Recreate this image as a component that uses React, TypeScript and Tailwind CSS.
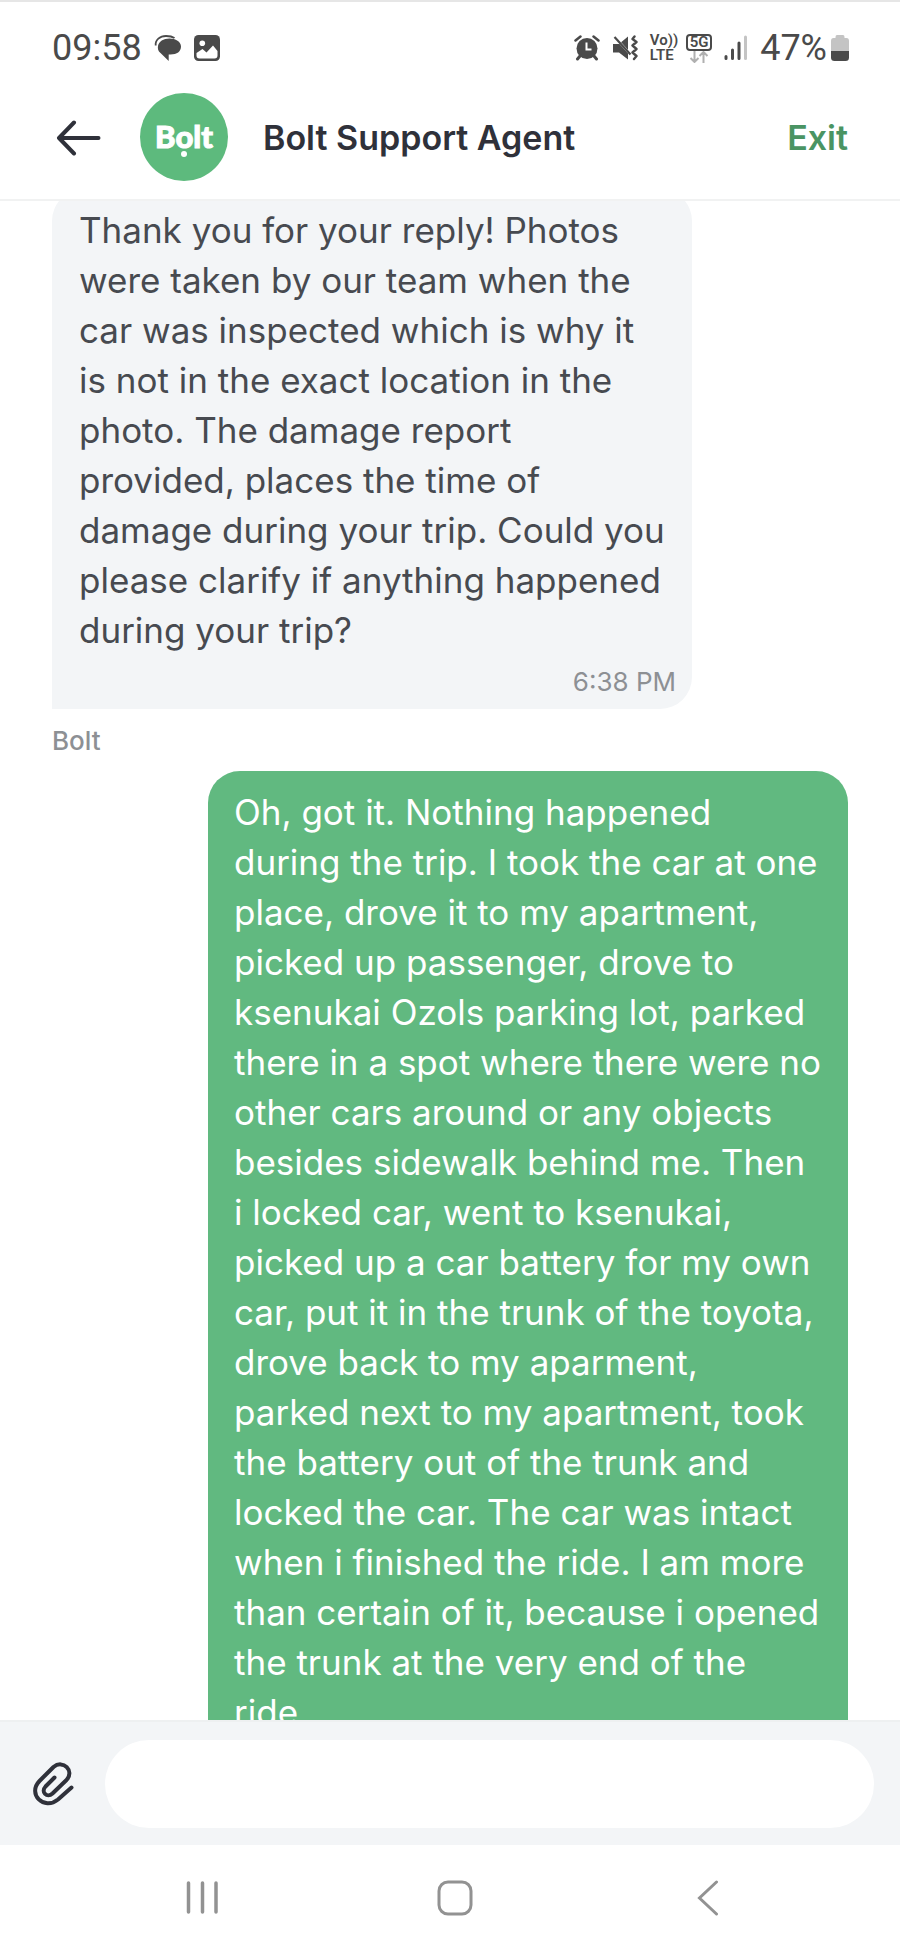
import type { ReactNode } from 'react';

type Message = { from: 'agent' | 'me'; text: string; time?: string; sender?: string };

const messages: Message[] = [
  {
    from: 'agent',
    text: 'Thank you for your reply! Photos were taken by our team when the car was inspected which is why it is not in the exact location in the photo. The damage report provided, places the time of damage during your trip. Could you please clarify if anything happened during your trip?',
    time: '6:38 PM',
    sender: 'Bolt',
  },
  {
    from: 'me',
    text: 'Oh, got it. Nothing happened during the trip. I took the car at one place, drove it to my apartment, picked up passenger, drove to ksenukai Ozols parking lot, parked there in a spot where there were no other cars around or any objects besides sidewalk behind me. Then i locked car, went to ksenukai, picked up a car battery for my own car, put it in the trunk of the toyota, drove back to my aparment, parked next to my apartment, took the battery out of the trunk and locked the car. The car was intact when i finished the ride. I am more than certain of it, because i opened the trunk at the very end of the ride.',
  },
];

const StatusBar = () => (
  <div className="flex h-24 items-center justify-between border-t-2 border-[#e6e6e6] pr-[51px] pb-0.5 pl-[52px] font-['Roboto',sans-serif] text-[#4a4a4a]">
    <div className="flex items-center gap-3">
      <span className="text-[36px] leading-10">09:58</span>
      <svg width="28" height="28" viewBox="0 0 28 28" fill="currentColor" aria-hidden="true">
        <path d="M15.500 4.500C21.500 4.500 27 7.500 27 12.500C27 17.500 23 20.500 16.500 20.500H14.700V27L6.500 19C4 17 3.500 14.500 4 12C4.700 7.500 9.500 4.500 15.500 4.500Z" />
        <path d="M1.700 11.500C1 6 6 2 12 2C15 2 18 2.300 20.500 4" fill="none" stroke="currentColor" strokeWidth="1.800" />
      </svg>
      <svg width="26" height="26" viewBox="0 0 26 26" aria-hidden="true">
        <rect width="26" height="26" rx="4.500" fill="currentColor" />
        <circle cx="8.300" cy="8.300" r="2.800" fill="#fff" />
        <path d="M2.500 18L8.500 14L12.500 17.500L19 10.500L23.500 16V20.500Q23.500 23.500 20.500 23.500H5.500Q2.500 23.500 2.500 20.500Z" fill="#fff" />
      </svg>
    </div>

    <div className="flex items-center gap-3">
      <svg width="26" height="26" viewBox="0 0 26 26" aria-hidden="true">
        <circle cx="13" cy="13.500" r="10.500" fill="currentColor" />
        <path d="M1.500 5.500L6.500 1.500M24.500 5.500L19.500 1.500" stroke="currentColor" strokeWidth="2.500" strokeLinecap="round" />
        <path d="M6 21L3.500 24M20 21L22.500 24" stroke="currentColor" strokeWidth="3" strokeLinecap="round" />
        <path d="M12.500 7.500V14.500H17.500" fill="none" stroke="#fff" strokeWidth="2" />
      </svg>
      <svg width="26" height="26" viewBox="0 0 26 26" aria-hidden="true">
        <path d="M1 9H7L16 1.500V24.500L7 17.500H1Z" fill="currentColor" />
        <path d="M1 0L19 20" stroke="#fff" strokeWidth="2.500" />
        <path d="M2.500 2L18.500 19.500" stroke="currentColor" strokeWidth="2.200" />
        <path d="M22.500 1.500L20.500 4L24.500 7L20.500 10.500L24.500 14L20.500 17.500L24.500 21L22 24" fill="none" stroke="currentColor" strokeWidth="2.400" strokeLinejoin="round" strokeLinecap="round" />
      </svg>
      <div className="flex flex-col text-[15px] leading-[15px] font-semibold">
        <span>Vo))</span>
        <span>LTE</span>
      </div>
      <div className="-ml-1 flex flex-col items-center">
        <span className="w-[26px] rounded-sm border-2 border-current text-center text-[15px] leading-[13px] font-semibold">5G</span>
        <svg width="20" height="12" viewBox="0 0 20 12" fill="none" stroke="#b0b0b0" strokeWidth="2" aria-hidden="true">
          <path d="M5.500 0V10.500M1.500 7L5.500 11L9.500 7M14.500 12V1.500M10.500 5L14.500 1L18.500 5" />
        </svg>
      </div>
      <svg width="24" height="26" viewBox="0 0 24 26" fill="none" strokeWidth="3" strokeLinecap="round" aria-hidden="true">
        <path d="M2 21.500V23.500M8.500 15V23.500M15 8V23.500" stroke="currentColor" />
        <path d="M21.500 2V23.500" stroke="#c4c4c4" />
      </svg>
      <div className="flex items-center gap-1">
        <span className="text-[36px] leading-10">47%</span>
        <svg width="18" height="26" viewBox="0 0 18 26" aria-hidden="true">
          <path d="M4.500 2Q4.500 0 6 0H12Q13.500 0 13.500 2V3H15.500Q18 3 18 6V16H0V6Q0 3 2.500 3H4.500Z" fill="#c4c4c4" />
          <path d="M0 16H18V22.500Q18 26 14.500 26H3.500Q0 26 0 22.500Z" fill="currentColor" />
        </svg>
      </div>
    </div>
  </div>
);

const BoltLogo = () => (
  <svg width="88" height="88" viewBox="0 0 88 88" role="img" aria-label="Bolt">
    <circle cx="44" cy="44" r="44" fill="#5dba7d" />
    <text x="44" y="55" textAnchor="middle" fill="#fff" stroke="#fff" strokeWidth="1" fontFamily="Lato, sans-serif" fontWeight="900" fontSize="31">Bolt</text>
    <circle cx="44" cy="61" r="3" fill="#fff" />
  </svg>
);

const Header = () => (
  <header className="flex h-[105px] items-start border-b-2 border-[#f1f2f2] pr-[52px] pl-14">
    <button type="button" aria-label="Back" className="flex h-[84px] items-center text-[#2f313a]">
      <svg width="46" height="36" viewBox="0 0 46 36" fill="none" stroke="currentColor" strokeWidth="4" strokeLinecap="round" strokeLinejoin="round">
        <path d="M42.500 18H3M18 2.500L3 18L18 33.500" />
      </svg>
    </button>
    <div className="ml-[38px] -mt-[3px]">
      <BoltLogo />
    </div>
    <h1 className="ml-[35px] flex-1 text-[34px] leading-[84px] font-semibold text-[#2f313a]">Bolt Support Agent</h1>
    <button type="button" className="text-[34px] leading-[84px] font-semibold text-[#4a9463]">Exit</button>
  </header>
);

const Bubble = ({ message }: { message: Message }) => {
  if (message.from === 'me') {
    return (
      <div className="w-[640px] self-end rounded-t-[32px] rounded-bl-[32px] bg-[#61b980] px-[26px] py-4 text-white">
        <p>{message.text}</p>
      </div>
    );
  }
  return (
    <div className="w-[640px]">
      <div className="rounded-t-[32px] rounded-br-[32px] bg-[#f3f5f7] pt-4 pr-[26px] pb-1.5 pl-[27px] text-[#474a50]">
        <p>{message.text}</p>
        <p className="-mr-2.5 pt-1.5 text-right text-[26px] leading-[42px] font-normal text-[#8d9094]">{message.time}</p>
      </div>
      <p className="pt-3 text-[26px] leading-10 font-medium text-[#8d9094]">{message.sender}</p>
    </div>
  );
};

const Composer = () => (
  <form className="flex h-[125px] shrink-0 items-center border-t-2 border-[#eef0f1] bg-[#f3f5f7] pr-[26px] pl-8">
    <button type="button" aria-label="Attach file" className="text-[#2f313a]">
      <svg width="44" height="48" viewBox="0 0 44 48" fill="none" stroke="currentColor" strokeWidth="4" strokeLinecap="round" strokeLinejoin="round">
        <path d="M22.500 17.500L13.500 26.500C8.500 32 15 38.500 20.500 33.500L34.500 20C43 11 31 -1 21.500 7L7.500 21C-5 34 12 51 26 39.500L39.500 27.500" />
      </svg>
    </button>
    <input type="text" aria-label="Message" className="ml-[29px] h-[88px] min-w-0 flex-1 rounded-full bg-white px-8 outline-none" />
  </form>
);

const NavButton = ({ label, children }: { label: string; children: ReactNode }) => (
  <button type="button" aria-label={label}>
    <svg width="36" height="36" viewBox="0 0 36 36" fill="none" stroke="#929292" strokeWidth="3" strokeLinecap="round">
      {children}
    </svg>
  </button>
);

const NavBar = () => (
  <nav className="flex h-[105px] shrink-0 items-center justify-between pr-[174px] pl-[184px]">
    <NavButton label="Recent apps">
      <path d="M4.500 3V32M18.500 3V32M32 3V32" strokeWidth="3.500" />
    </NavButton>
    <NavButton label="Home">
      <rect x="2" y="2" width="32" height="32" rx="9" />
    </NavButton>
    <NavButton label="Back">
      <path d="M26.500 2L9.500 18L26.500 34" />
    </NavButton>
  </nav>
);

export default function App() {
  return (
    <div className="flex h-screen flex-col bg-white font-['Inter',sans-serif]">
      <StatusBar />
      <Header />
      <main className="flex min-h-0 flex-1 flex-col overflow-hidden px-[52px]">
        <div className="-mt-3 flex flex-col gap-2.5 text-[35px] leading-[50px] font-normal">
          {messages.map((message, idx) => (
            <Bubble key={idx} message={message} />
          ))}
        </div>
      </main>
      <Composer />
      <NavBar />
    </div>
  );
}
